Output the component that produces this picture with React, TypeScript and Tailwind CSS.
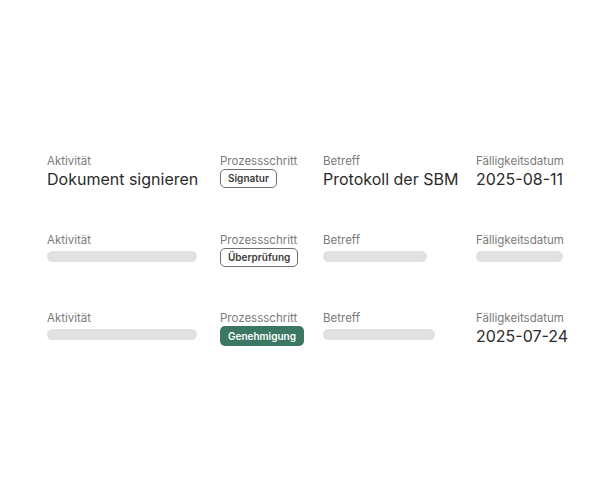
const font = { fontFamily: "Inter, 'Noto Sans', sans-serif" };

type Cell =
  | { kind: "text"; value: string }
  | { kind: "bar"; width: string }
  | { kind: "badge"; value: string; filled?: boolean };

type Row = { activity: Cell; step: Cell; subject: Cell; due: Cell };

const rows: Row[] = [
  {
    activity: { kind: "text", value: "Dokument signieren" },
    step: { kind: "badge", value: "Signatur" },
    subject: { kind: "text", value: "Protokoll der SBM" },
    due: { kind: "text", value: "2025-08-11" },
  },
  {
    activity: { kind: "bar", width: "w-[150px]" },
    step: { kind: "badge", value: "Überprüfung" },
    subject: { kind: "bar", width: "w-[104px]" },
    due: { kind: "bar", width: "w-[87px]" },
  },
  {
    activity: { kind: "bar", width: "w-[150px]" },
    step: { kind: "badge", value: "Genehmigung", filled: true },
    subject: { kind: "bar", width: "w-[112px]" },
    due: { kind: "text", value: "2025-07-24" },
  },
];

function Value({ cell }: { cell: Cell }) {
  if (cell.kind === "text") {
    return <div className="text-[16px] leading-5 text-[#2b2b2b] whitespace-nowrap">{cell.value}</div>;
  }
  if (cell.kind === "bar") {
    return <div className={`${cell.width} h-[11px] rounded-full bg-[#e1e1e0] mt-[3px]`} />;
  }
  return (
    <span
      className={
        cell.filled
          ? "self-start inline-flex h-[20px] items-center rounded-[5px] bg-[#3b7762] px-[8px] text-[10px] font-semibold text-white whitespace-nowrap"
          : "self-start inline-flex h-[19px] items-center rounded-[5px] border border-[#707070] px-[7px] text-[10px] font-semibold text-[#3a3a3a] whitespace-nowrap"
      }
    >
      {cell.value}
    </span>
  );
}

function Column({ label, cell, width }: { label: string; cell: Cell; width: string }) {
  return (
    <div className={`${width} flex flex-col gap-[1px]`}>
      <div className="text-[11.5px] leading-[14px] text-[#7a7a7a] whitespace-nowrap">{label}</div>
      <Value cell={cell} />
    </div>
  );
}

export default function App() {
  return (
    <div className="min-h-[500px] w-[607px] bg-white flex flex-col justify-center pl-[47px]" style={font}>
      <div className="flex flex-col gap-[44px]">
        {rows.map((r, i) => (
          <div key={i} className="flex">
            <Column label="Aktivität" cell={r.activity} width="w-[173px]" />
            <Column label="Prozessschritt" cell={r.step} width="w-[103px]" />
            <Column label="Betreff" cell={r.subject} width="w-[153px]" />
            <Column label="Fälligkeitsdatum" cell={r.due} width="w-[100px]" />
          </div>
        ))}
      </div>
    </div>
  );
}
